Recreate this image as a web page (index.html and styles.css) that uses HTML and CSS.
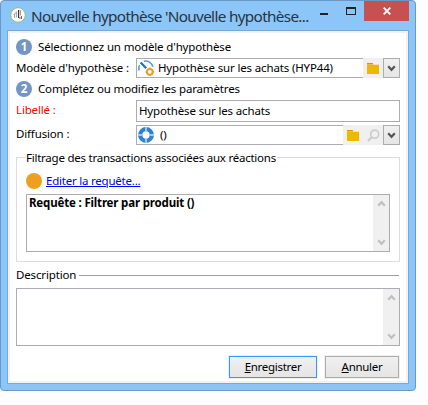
FILE: index.html
```html
<!DOCTYPE html>
<html lang="fr">
<head>
<meta charset="utf-8">
<title>Nouvelle hypothèse</title>
<link rel="stylesheet" href="styles.css">
</head>
<body>
<svg class="defs" width="0" height="0">
  <symbol id="folder" viewBox="0 0 14 13"><path d="M1 1h6v1h6v2H1z" fill="#f9b45a"/><path d="M1 1h6v1H1z" fill="#e88a10"/><path d="M7 2h6v1H7z" fill="#f8dcae"/><path d="M1 3h12v9H1z" fill="#efb800"/></symbol>
  <symbol id="down" viewBox="0 0 9 7"><path d="M1.2 1.2 4.5 4.8 7.8 1.2" fill="none" stroke="currentColor" stroke-width="2.2"/></symbol>
</svg>
<div class="window">
  <header class="titlebar">
    <svg class="app-icon" width="16" height="16" viewBox="0 0 16 16"><circle cx="8" cy="8" r="7.3" fill="#fff" stroke="#93bd72"/><path d="M4.5 7v4M6.5 4.5v6" stroke="#aaa" stroke-width="1.2"/><path d="M8.6 3v8" stroke="#333" stroke-width="1.1"/><path d="M10.3 3v5.5" stroke="#999" stroke-width="1.2"/><path d="M9 11h3M11.5 9v3" stroke="#666"/><path d="M4 7.5 6.5 5" stroke="#999"/></svg>
    <h1 class="title">Nouvelle hypothèse 'Nouvelle hypothèse...</h1>
    <div class="controls">
      <span class="minimize"></span>
      <span class="maximize"></span>
      <span class="close"><svg width="8" height="8" viewBox="0 0 8 8"><path d="M.7.7l6.6 6.6M7.3.7.7 7.3" stroke="#fff" stroke-width="1.8"/></svg></span>
    </div>
  </header>
  <main class="client">
    <div class="step"><span class="number">1</span><span>Sélectionnez un modèle d'hypothèse</span></div>
    <div class="row">
      <label class="label">Modèle d'hypothèse :</label>
      <div class="field combo">
        <svg width="16" height="16" viewBox="0 0 16 16"><path d="M1.2 10.5A7.4 7.4 0 0 1 1.6 5M5.8 1.2a7.4 7.4 0 0 1 9 5.6" fill="none" stroke="#5b9dd5" stroke-width="1.6"/><path d="M2.6 2.4 8.2 8.2" stroke="#1f6fba" stroke-width="2.2"/><circle cx="11.8" cy="11.8" r="2.9" fill="#fff" stroke="#e8a02c" stroke-width="2"/><path d="M11.8 7.6v1.3M11.8 14.7V16M7.6 11.8h1.3M14.7 11.8H16" stroke="#e8a02c" stroke-width="1.8"/></svg>
        <span class="value">Hypothèse sur les achats (HYP44)</span>
        <span class="tool"><svg width="14" height="13"><use href="#folder"/></svg></span>
        <span class="drop"><svg width="9" height="7"><use href="#down"/></svg></span>
      </div>
    </div>
    <div class="step second"><span class="number">2</span><span>Complétez ou modifiez les paramètres</span></div>
    <div class="row tall">
      <label class="label required">Libellé :</label>
      <div class="field"><span>Hypothèse sur les achats</span></div>
    </div>
    <div class="row">
      <label class="label diffusion">Diffusion :</label>
      <div class="field combo">
        <svg width="16" height="16" viewBox="0 0 16 16"><circle cx="8" cy="8" r="5.8" fill="none" stroke="#2f82cf" stroke-width="4.3"/><path d="M8 0v4.2M8 11.8V16M0 8h4.2M11.8 8H16" stroke="#c4e1f7" stroke-width="1.4"/></svg>
        <span class="value empty">()</span>
        <span class="tool"><svg width="14" height="13"><use href="#folder"/></svg></span>
        <span class="tool"><svg width="13" height="13" viewBox="0 0 13 13"><circle cx="7.7" cy="5.2" r="4" fill="none" stroke="#ccc" stroke-width="1.7"/><path d="M4.8 8 1 12" stroke="#ccc" stroke-width="2.2"/></svg></span>
        <span class="drop"><svg width="9" height="7"><use href="#down"/></svg></span>
      </div>
    </div>
    <section class="group">
      <div class="legend">Filtrage des transactions associées aux réactions</div>
      <div class="edit"><span class="dot"></span><a class="link">Editer la requête...</a></div>
      <div class="area">
        <span class="query">Requête : Filtrer par produit ()</span>
        <span class="scroll"><svg class="up" width="9" height="7"><use href="#down"/></svg><svg width="9" height="7"><use href="#down"/></svg></span>
      </div>
    </section>
    <div class="divider"><span>Description</span></div>
    <div class="area">
      <span></span>
      <span class="scroll"><svg class="up" width="9" height="7"><use href="#down"/></svg><svg width="9" height="7"><use href="#down"/></svg></span>
    </div>
    <footer class="actions">
      <button class="button primary"><span><u>E</u>nregistrer</span></button>
      <button class="button cancel"><span><u>A</u>nnuler</span></button>
    </footer>
  </main>
</div>
</body>
</html>
```
FILE: styles.css
```css
* { box-sizing: border-box; }
body { margin: 0; background: #fdfdfd; color: #000; font: 11.5px/16px "Noto Sans", "Open Sans", sans-serif; letter-spacing: -0.15px; white-space: nowrap; }
.defs { display: block; }
svg { flex: none; display: block; }
.window { width: 416px; height: 391px; padding: 0 6px; border: 1px solid #6998c5; border-radius: 4px; background: #8cc6f9; }
.titlebar { height: 29px; display: flex; padding-left: 3px; }
.app-icon { margin-top: 6px; }
.title { margin: 4px 0 0 5px; width: 289px; flex: none; font-size: 15.3px; line-height: 22px; font-weight: 400; color: #29333d; letter-spacing: -0.67px; }
.controls { display: flex; flex: none; }
.minimize { width: 8px; height: 2px; margin-top: 12px; background: #222; }
.maximize { width: 10px; height: 8px; margin: 6px 0 0 18px; border: 1px solid #222; border-top-width: 2px; }
.close { width: 45px; height: 20px; margin-left: 8px; background: #c75050; display: flex; align-items: center; justify-content: center; }
.client { width: 402px; height: 354px; border: 1px solid #78a8d3; background: #fff; box-shadow: inset 0 0 0 2px #f1f1f1; padding: 8px 8px 0; }
.step { display: flex; align-items: center; gap: 6px; height: 16px; }
.second { margin: 3px 0 3px; }
.number { width: 16px; height: 16px; border-radius: 50%; background: #7496c4; color: #fff; font-weight: 700; line-height: 16px; text-align: center; }
.row { display: flex; align-items: center; height: 20px; margin-top: 3px; }
.row.tall { height: 22px; }
.label { width: 120px; }
.required { color: #f00; padding-bottom: 2px; }
.diffusion { padding-bottom: 2px; }
.field { flex: 1; align-self: stretch; display: flex; align-items: center; border: 1px solid #abadb3; padding-left: 2px; }
.combo { padding-left: 1px; }
.value { flex: 1; margin-left: 4px; }
.value.empty { margin-left: 6px; }
.tool { width: 20px; align-self: stretch; margin: -1px 0; background: #f0f0f0; display: flex; align-items: center; justify-content: center; }
.drop { width: 17px; align-self: stretch; margin: -1px -1px -1px 0; border: 1px solid #acacac; background: linear-gradient(#f0f0f0, #e5e5e5); color: #555; display: flex; align-items: center; justify-content: center; }
.group { height: 105px; margin-top: 12px; border: 1px solid #dcdcdc; padding: 0 9px; }
.legend { width: max-content; margin-top: -8px; padding-right: 1px; background: #fff; letter-spacing: -0.24px; }
.edit { display: flex; align-items: center; gap: 4px; height: 16px; margin: 7px 0 5px; }
.dot { width: 16px; height: 16px; border-radius: 50%; background: #ef9f20; }
.link { color: #00f; text-decoration: underline; letter-spacing: -0.22px; }
.area { height: 58px; border: 1px solid #abadb3; display: flex; justify-content: space-between; padding-left: 2px; }
.query { font-weight: 700; letter-spacing: -0.17px; }
.scroll { width: 16px; background: #f0f0f0; color: #c0c0c0; display: flex; flex-direction: column; align-items: center; justify-content: space-between; padding: 5px 0; }
.up { transform: rotate(180deg); }
.divider { display: flex; align-items: center; height: 16px; margin: 5px 1px 5px 0; gap: 3px; }
.divider::after { content: ""; flex: 1; height: 1px; background: #a0a0a0; }
.actions { display: flex; justify-content: flex-end; gap: 8px; margin: 10px 1px 0 0; }
.button { width: 88px; height: 22px; padding: 0; border: 1px solid #acacac; background: linear-gradient(#f0f0f0, #e5e5e5); box-shadow: 0 0 0 1px #f0f0f0; color: #000; font: inherit; letter-spacing: -0.3px; }
.primary { border-color: #3399ff; }
.cancel { width: 74px; }
```
